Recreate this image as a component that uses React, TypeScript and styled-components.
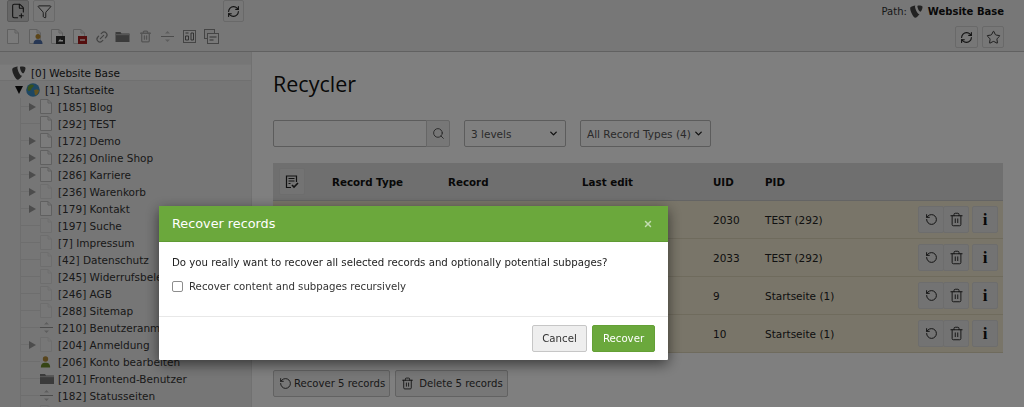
import React from 'react';
import styled, { createGlobalStyle } from 'styled-components';
import {
  ChevronDown,
  FilePlus2,
  Filter,
  Link2,
  RefreshCw,
  RotateCcw,
  Search,
  Star,
  Trash2,
  X,
} from 'lucide-react';

const GlobalStyle = createGlobalStyle`
  html, body {
    margin: 0;
    padding: 0;
    background: #fff;
    overflow: hidden;
  }
  * {
    box-sizing: border-box;
  }
  body {
    font-family: "DejaVu Sans", Verdana, sans-serif;
    font-size: 10.5px;
    color: #333;
  }
`;

const Typo3Logo = ({ size = 14, color = '#444' }: { size?: number; color?: string }) => (
  <svg width={size} height={size} viewBox="0 0 14 14" fill={color}>
    <path d="M10.2 9.6c-.2.1-.4.1-.6.1-1.7 0-4.2-6-4.2-8 0-.7.2-1 .4-1.2C3.7.7 1.2 1.5.5 2.5c-.2.2-.3.6-.3 1.1C.2 6.7 3.5 13.8 5.8 13.8c1.1 0 2.9-1.8 4.4-4.2zM9.2.5c2.1 0 4.3.3 4.3 1.5 0 2.4-1.5 5.3-2.3 5.3C9.8 7.3 8 3.3 8 1.4 8 .6 8.3.5 9.2.5z" />
  </svg>
);

const PageIcon = ({ badge, dim }: { badge?: string; dim?: boolean }) => (
  <svg width={badge ? 14 : 12} height="15" viewBox={badge ? '0 0 14 15' : '0 0 12 15'}>
    <path
      d="M.5.5h7.5L11.500 4v10.500H.5z"
      fill={dim ? '#efefef' : '#f6f6f6'}
      stroke={dim ? '#dcdcdc' : '#c0c0c0'}
    />
    <path d="M8 .5V4h3.500" fill="none" stroke={dim ? '#dcdcdc' : '#c0c0c0'} />
    {badge === 'user' && (
      <>
        <circle cx="9" cy="7.500" r="2.500" fill="#b98a30" />
        <path d="M4.500 15c0-3.500 2-4.500 4.500-4.500s4.500 1 4.500 4.500z" fill="#4f6fa8" />
      </>
    )}
    {badge && badge !== 'user' && <rect x="5" y="7" width="9" height="8" fill={badge} />}
    {badge === '#a81c1c' && <path d="M7 11h5" stroke="#fff" strokeWidth="1.300" />}
    {badge === '#2e2e2e' && <path d="M7 12.500l2.500-3v1.500H12v1.500H9z" fill="#fff" />}
  </svg>
);

const DividerIcon = () => (
  <svg width="13" height="13" viewBox="0 0 13 13">
    <path d="M0 6.500h13" stroke="#999" />
    <path d="M4 3.500h5L6.500 1zM4 9.500h5L6.500 12z" fill="#bbb" />
  </svg>
);

const FolderIcon = ({ width = 14 }: { width?: number }) => (
  <svg width={width} height="11" viewBox="0 0 14 11">
    <path d="M0 1h5l1 1.500h8V11H0z" fill="#777" />
    <path d="M0 3h14v1.200H0z" fill="#aaa" />
  </svg>
);

const UserIcon = () => (
  <svg width="11" height="13" viewBox="0 0 13 14">
    <circle cx="6.500" cy="4" r="3.200" fill="#b08a3a" />
    <path d="M1 14c0-4 2-5.500 5.500-5.500S12 10 12 14z" fill="#6c8a2a" />
  </svg>
);

const GlobeIcon = () => (
  <svg width="14" height="14" viewBox="0 0 14 14">
    <circle cx="7" cy="7" r="6.800" fill="#3d8fc4" />
    <path d="M3 2.500c2-1.500 4-1 5 0-.5 2-2 1.500-2.500 3S4 8.500 2.500 8C1 6 1.500 4 3 2.500z" fill="#6fa23a" />
    <path d="M8 7c2-1 4-.5 5 .5-.3 2.500-2 4.500-3.500 5C8 11 9 9 8 7z" fill="#c9a63e" />
  </svg>
);

const ContentIcon = ({ double }: { double?: boolean }) => (
  <svg width="15" height="15" viewBox="0 0 15 15" fill="none" stroke="#8a8a8a">
    {double && <rect x=".5" y=".5" width="10" height="9" fill="#e8e8e8" />}
    <rect
      x={double ? 3.5 : 1.5}
      y={double ? 4.5 : 1.5}
      width={double ? 11 : 12}
      height={double ? 10 : 12}
      fill="#f0f0f0"
    />
    {!double && <path d="M3.500 4h3M3.500 7h3v4h-3zM9 4h2.500v7H9z" strokeWidth=".9" stroke="#555" />}
    {double && <path d="M5.500 8h7M5.500 11h4" strokeWidth=".9" stroke="#555" />}
  </svg>
);

const SelectAllIcon = () => (
  <svg width="14" height="14" viewBox="0 0 14 14" fill="none" stroke="#222">
    <path d="M6 12.500H1.500V1h10v6" strokeWidth="1.200" />
    <path d="M3.500 3.500h6M3.500 6h6M3.500 8.500h2" strokeWidth="1.200" />
    <path d="M7 10l2 2 4-4" strokeWidth="1.600" />
  </svg>
);

const Page = styled.div`
  width: 1024px;
  height: 407px;
  overflow: hidden;
`;

const DocHeader = styled.header`
  height: 52px;
  background: #eeeeee;
  border-bottom: 1px solid #c3c3c3;
  padding: 0 20px 0 7px;
  display: flex;
  justify-content: space-between;
`;

const HeaderLeft = styled.div`
  display: flex;
  flex-direction: column;
  width: 237px;
`;

const HeaderTopRow = styled.div`
  height: 22px;
  display: flex;
  gap: 4px;
`;

const ToolButton = styled.button<{ $pressed?: boolean; $w?: number }>`
  width: ${(p) => p.$w ?? 22}px;
  height: 22px;
  padding: 0;
  display: flex;
  align-items: center;
  justify-content: center;
  background: ${(p) => (p.$pressed ? '#cfcfcf' : '#eeeeee')};
  border: 1px solid ${(p) => (p.$pressed ? '#b5b5b5' : '#d2d2d2')};
  border-radius: 2px;
  color: #222;
`;

const PushRight = styled.div`
  margin-left: auto;
`;

const IconRow = styled.div`
  margin-top: 7px;
  height: 15px;
  display: flex;
  align-items: center;
  color: #888;
`;

const IconSlot = styled.span<{ $w: number }>`
  width: ${(p) => p.$w}px;
  display: flex;
  align-items: center;
`;

const HeaderRight = styled.div`
  display: flex;
  flex-direction: column;
  align-items: flex-end;
`;

const PathLine = styled.div`
  height: 22px;
  display: flex;
  align-items: center;
  font-size: 10px;
  color: #333;
  gap: 3px;
`;

const PathName = styled.strong`
  color: #111;
  margin-left: 2px;
`;

const HeaderButtons = styled.div`
  display: flex;
  gap: 4px;
  margin-top: 4px;
`;

const Main = styled.div`
  display: flex;
  height: 355px;
`;

const Sidebar = styled.aside`
  width: 252px;
  flex: none;
  background: #ededed;
  border-right: 1px solid #e2e2e2;
  padding-top: 12px;
  overflow: hidden;
`;

const RootRow = styled.div`
  height: 17px;
  background: #f8f8f8;
  border-top: 1px solid #f0f0f0;
  border-bottom: 1px solid #e0e0e0;
  display: flex;
  align-items: center;
  padding-left: 12px;
  gap: 5px;
  color: #222;
`;

const SiteRow = styled.div`
  height: 17px;
  display: flex;
  align-items: center;
  padding-left: 15px;
  color: #222;
`;

const OpenArrow = styled.span`
  width: 0;
  height: 0;
  border-left: 4px solid transparent;
  border-right: 4px solid transparent;
  border-top: 8px solid #111;
  margin-right: 3px;
`;

const SiteLabel = styled.span`
  margin-left: 5px;
`;

const TreeChildren = styled.div`
  margin-left: 20px;
  border-left: 1px solid #dcdcdc;
`;

const TreeRow = styled.div`
  height: 17px;
  display: flex;
  align-items: center;
  white-space: nowrap;
  color: #333;
`;

const Branch = styled.span`
  width: 8px;
  height: 1px;
  background: #dcdcdc;
`;

const Expander = styled.span<{ $show: boolean }>`
  width: 11px;
  display: flex;
  align-items: center;
  height: 1px;
  background: ${(p) => (p.$show ? 'transparent' : '#dcdcdc')};

  &::before {
    content: '';
    display: ${(p) => (p.$show ? 'block' : 'none')};
    border-top: 4px solid transparent;
    border-bottom: 4px solid transparent;
    border-left: 7px solid #999;
  }
`;

const TreeIcon = styled.span`
  width: 18px;
  flex: none;
  display: flex;
  align-items: center;
`;

const Content = styled.main`
  flex: 1;
  min-width: 0;
  background: #ffffff;
  padding: 18px 21px 0 21px;
`;

const Title = styled.h1`
  margin: 0;
  height: 28px;
  font-family: "Open Sans", sans-serif;
  font-size: 21.5px;
  line-height: 28px;
  font-weight: 400;
  color: #111;
`;

const Filters = styled.div`
  margin-top: 22px;
  display: flex;
`;

const SearchInput = styled.div`
  width: 154px;
  height: 27px;
  background: #fff;
  border: 1px solid #b8b8b8;
  border-radius: 2px 0 0 2px;
`;

const SearchButton = styled.div`
  width: 24px;
  height: 27px;
  margin-left: -1px;
  background: #eeeeee;
  border: 1px solid #cccccc;
  border-radius: 0 2px 2px 0;
  display: flex;
  align-items: center;
  justify-content: center;
  color: #444;
`;

const SelectBox = styled.div<{ $w: number }>`
  width: ${(p) => p.$w}px;
  height: 27px;
  margin-left: 14px;
  padding: 0 6px;
  background: #fff;
  border: 1px solid #b8b8b8;
  border-radius: 2px;
  display: flex;
  align-items: center;
  justify-content: space-between;
  color: #555;
  white-space: nowrap;
`;

const Table = styled.div`
  margin-top: 16px;
  width: 730px;
`;

const HeadRow = styled.div`
  height: 38px;
  background: #dedede;
  border-bottom: 1px solid #c8c8c8;
  padding-left: 6px;
  display: grid;
  grid-template-columns: 53px 116px 134px 131px 52px 1fr;
  align-items: center;
  font-size: 10.3px;
  font-weight: 700;
  color: #111;
`;

const Row = styled.div`
  height: 38px;
  background: #f3ebd2;
  border-bottom: 1px solid #dfd6bb;
  padding: 0 5px 0 59px;
  display: grid;
  grid-template-columns: 116px 134px 131px 52px 1fr auto;
  align-items: center;
  color: #222;
`;

const Hidden = styled.span``;

const SquareButton = styled.div`
  width: 26px;
  height: 27px;
  background: #e6e6e6;
  border: 1px solid #dadada;
  border-radius: 2px;
  display: flex;
  align-items: center;
  justify-content: center;
  color: #222;
`;

const Actions = styled.div`
  display: flex;
  gap: 3px;
`;

const ButtonGroup = styled.div`
  display: flex;
  ${SquareButton} + ${SquareButton} {
    margin-left: -1px;
  }
`;

const InfoGlyph = styled.span`
  font-family: "Liberation Serif", serif;
  font-size: 17px;
  font-weight: 700;
  color: #111;
`;

const BottomActions = styled.div`
  margin-top: 17px;
  display: flex;
  gap: 5px;
`;

const LabelButton = styled.div<{ $gap: number }>`
  height: 27px;
  padding: 0 4px 0 5px;
  display: flex;
  align-items: center;
  gap: ${(p) => p.$gap}px;
  font-size: 10.1px;
  background: #eeeeee;
  border: 1px solid #c4c4c4;
  border-radius: 2px;
  color: #333;
  white-space: nowrap;
`;

const Backdrop = styled.div`
  position: fixed;
  inset: 0;
  background: rgba(0, 0, 0, 0.5);
  padding: 206px 0 0 159px;
`;

const Modal = styled.div`
  width: 509px;
  height: 154px;
  background: #fff;
  border-radius: 1px;
  box-shadow: 0 4px 14px rgba(0, 0, 0, 0.55);
  display: flex;
  flex-direction: column;
`;

const ModalHead = styled.div`
  height: 36px;
  flex: none;
  background: #6ba83c;
  border-bottom: 1px solid #5f9a34;
  padding: 0 15px 0 13px;
  display: flex;
  align-items: center;
  justify-content: space-between;
  color: #fff;
  font-size: 12.8px;
`;

const CloseMark = styled.span`
  color: #c3dcb1;
  display: flex;
`;

const ModalBody = styled.div`
  flex: 1;
  padding: 13px 13px 0;
  font-size: 10.2px;
  color: #222;
`;

const Question = styled.p`
  margin: 0;
  line-height: 15px;
`;

const CheckLine = styled.label`
  margin-top: 10px;
  display: flex;
  align-items: center;
  gap: 6px;
  color: #333;
`;

const CheckBox = styled.span`
  width: 11px;
  height: 11px;
  background: #fff;
  border: 1px solid #8d8d8d;
  border-radius: 2px;
  margin-top: 1px;
`;

const ModalFoot = styled.div`
  height: 44px;
  flex: none;
  border-top: 1px solid #e8e8e8;
  padding: 8px 13px 0 0;
  display: flex;
  justify-content: flex-end;
  gap: 5px;
`;

const ModalButton = styled.button<{ $primary?: boolean }>`
  height: 27px;
  padding: 0;
  width: ${(p) => (p.$primary ? 63 : 55)}px;
  font: inherit;
  font-size: 10.2px;
  background: ${(p) => (p.$primary ? '#6ba83c' : '#eeeeee')};
  border: 1px solid ${(p) => (p.$primary ? '#64a035' : '#c6c6c6')};
  border-radius: 2px;
  color: ${(p) => (p.$primary ? '#fff' : '#333')};
`;

const treeItems: { label: string; icon: 'page' | 'dim' | 'divider' | 'user' | 'folder'; open?: boolean }[] = [
  { label: '[185] Blog', icon: 'page', open: true },
  { label: '[292] TEST', icon: 'page' },
  { label: '[172] Demo', icon: 'page', open: true },
  { label: '[226] Online Shop', icon: 'page', open: true },
  { label: '[286] Karriere', icon: 'page', open: true },
  { label: '[236] Warenkorb', icon: 'dim', open: true },
  { label: '[179] Kontakt', icon: 'page', open: true },
  { label: '[197] Suche', icon: 'dim' },
  { label: '[7] Impressum', icon: 'dim' },
  { label: '[42] Datenschutz', icon: 'dim' },
  { label: '[245] Widerrufsbelehrung', icon: 'dim' },
  { label: '[246] AGB', icon: 'dim' },
  { label: '[288] Sitemap', icon: 'dim' },
  { label: '[210] Benutzeranmeldung', icon: 'divider' },
  { label: '[204] Anmeldung', icon: 'dim', open: true },
  { label: '[206] Konto bearbeiten', icon: 'user' },
  { label: '[201] Frontend-Benutzer', icon: 'folder' },
  { label: '[182] Statusseiten', icon: 'divider' },
  { label: '', icon: 'dim' },
];

const rows = [
  { uid: '2030', pid: 'TEST (292)' },
  { uid: '2033', pid: 'TEST (292)' },
  { uid: '9', pid: 'Startseite (1)' },
  { uid: '10', pid: 'Startseite (1)' },
];

const renderTreeIcon = (icon: string) => {
  switch (icon) {
    case 'divider':
      return <DividerIcon />;
    case 'user':
      return <UserIcon />;
    case 'folder':
      return <FolderIcon />;
    default:
      return <PageIcon dim={icon === 'dim'} />;
  }
};

export default function App() {
  return (
    <Page>
      <GlobalStyle />
      <DocHeader>
        <HeaderLeft>
          <HeaderTopRow>
            <ToolButton $pressed>
              <FilePlus2 size={16} strokeWidth={1.6} />
            </ToolButton>
            <ToolButton>
              <Filter size={15} strokeWidth={1.4} />
            </ToolButton>
            <PushRight>
              <ToolButton $w={21}>
                <RefreshCw size={13} strokeWidth={2} />
              </ToolButton>
            </PushRight>
          </HeaderTopRow>
          <IconRow>
            <IconSlot $w={22}><PageIcon /></IconSlot>
            <IconSlot $w={22}><PageIcon badge="user" /></IconSlot>
            <IconSlot $w={22}><PageIcon badge="#2e2e2e" /></IconSlot>
            <IconSlot $w={22}><PageIcon badge="#a81c1c" /></IconSlot>
            <IconSlot $w={20}><Link2 size={14} strokeWidth={2} style={{ transform: 'rotate(-45deg)' }} /></IconSlot>
            <IconSlot $w={24}><FolderIcon width={15} /></IconSlot>
            <IconSlot $w={22}><Trash2 size={13} strokeWidth={2.4} color="#aaa" /></IconSlot>
            <IconSlot $w={21}><DividerIcon /></IconSlot>
            <IconSlot $w={22}><ContentIcon /></IconSlot>
            <IconSlot $w={20}><ContentIcon double /></IconSlot>
          </IconRow>
        </HeaderLeft>
        <HeaderRight>
          <PathLine>
            Path:
            <Typo3Logo size={13} />
            <PathName>Website Base</PathName>
          </PathLine>
          <HeaderButtons>
            <ToolButton $w={23}>
              <RefreshCw size={13} strokeWidth={2} />
            </ToolButton>
            <ToolButton>
              <Star size={15} strokeWidth={1.4} />
            </ToolButton>
          </HeaderButtons>
        </HeaderRight>
      </DocHeader>
      <Main>
        <Sidebar>
          <RootRow>
            <Typo3Logo size={14} />
            [0] Website Base
          </RootRow>
          <SiteRow>
            <OpenArrow />
            <GlobeIcon />
            <SiteLabel>[1] Startseite</SiteLabel>
          </SiteRow>
          <TreeChildren>
            {treeItems.map((item, i) => (
              <TreeRow key={i}>
                <Branch />
                <Expander $show={!!item.open} />
                <TreeIcon>{renderTreeIcon(item.icon)}</TreeIcon>
                {item.label}
              </TreeRow>
            ))}
          </TreeChildren>
        </Sidebar>
        <Content>
          <Title>Recycler</Title>
          <Filters>
            <SearchInput />
            <SearchButton>
              <Search size={13} strokeWidth={1.6} />
            </SearchButton>
            <SelectBox $w={102}>
              3 levels
              <ChevronDown size={11} strokeWidth={3} color="#222" />
            </SelectBox>
            <SelectBox $w={131}>
              All Record Types (4)
              <ChevronDown size={11} strokeWidth={3} color="#222" />
            </SelectBox>
          </Filters>
          <Table>
            <HeadRow>
              <SquareButton>
                <SelectAllIcon />
              </SquareButton>
              <span>Record Type</span>
              <span>Record</span>
              <span>Last edit</span>
              <span>UID</span>
              <span>PID</span>
            </HeadRow>
            {rows.map((row) => (
              <Row key={row.uid}>
                <Hidden />
                <Hidden />
                <Hidden />
                <span>{row.uid}</span>
                <span>{row.pid}</span>
                <Actions>
                  <ButtonGroup>
                    <SquareButton>
                      <RotateCcw size={13} strokeWidth={1.8} />
                    </SquareButton>
                    <SquareButton>
                      <Trash2 size={15} strokeWidth={1.5} />
                    </SquareButton>
                  </ButtonGroup>
                  <SquareButton>
                    <InfoGlyph>i</InfoGlyph>
                  </SquareButton>
                </Actions>
              </Row>
            ))}
          </Table>
          <BottomActions>
            <LabelButton $gap={2}>
              <RotateCcw size={13} strokeWidth={1.6} color="#222" />
              Recover 5 records
            </LabelButton>
            <LabelButton $gap={5}>
              <Trash2 size={13} strokeWidth={1.6} color="#222" />
              Delete 5 records
            </LabelButton>
          </BottomActions>
        </Content>
      </Main>
      <Backdrop>
        <Modal>
          <ModalHead>
            Recover records
            <CloseMark>
              <X size={10} strokeWidth={3.5} />
            </CloseMark>
          </ModalHead>
          <ModalBody>
            <Question>Do you really want to recover all selected records and optionally potential subpages?</Question>
            <CheckLine>
              <CheckBox />
              Recover content and subpages recursively
            </CheckLine>
          </ModalBody>
          <ModalFoot>
            <ModalButton>Cancel</ModalButton>
            <ModalButton $primary>Recover</ModalButton>
          </ModalFoot>
        </Modal>
      </Backdrop>
    </Page>
  );
}
